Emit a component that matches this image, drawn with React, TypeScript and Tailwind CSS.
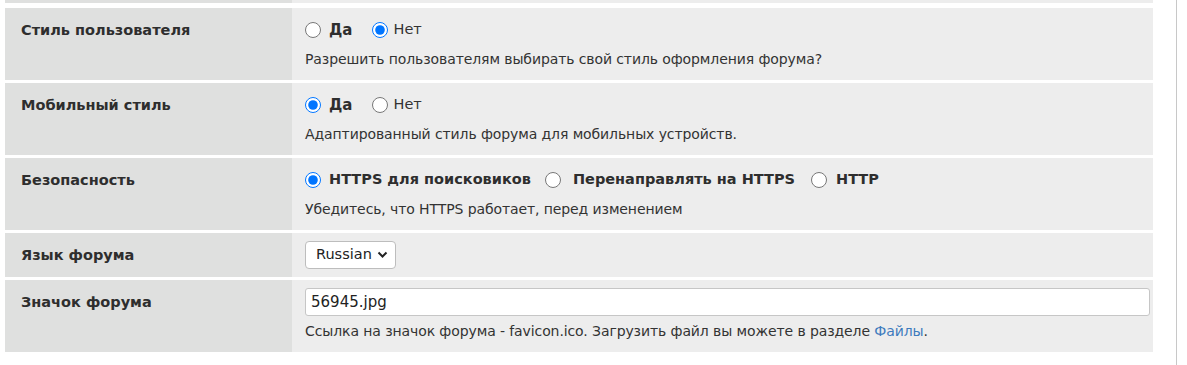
import { useState } from 'react';

// forum settings block
const font = { fontFamily: '"DejaVu Sans", Verdana, sans-serif' };

function Radio({ checked, onChange }: { checked: boolean; onChange: () => void }) {
  return <input type="radio" checked={checked} onChange={onChange} className="m-0 h-4 w-4 shrink-0" />;
}

function Row({ label, children, desc }: { label: string; children: React.ReactNode; desc?: React.ReactNode }) {
  return (
    <div className="flex">
      <div className="w-[287px] shrink-0 bg-[#dfe0df] pl-4 pt-3 text-[14.5px] leading-5 font-bold text-[#2e2e2e]">{label}</div>
      <div className={`flex-1 bg-[#ededed] pl-[13px] pr-[3px] pt-2 ${desc ? 'pb-[11px]' : 'pb-2'}`}>
        <div className="flex h-7 items-center">{children}</div>
        {desc && <div className="mt-[5px] text-[14px] leading-5 tracking-[-0.1px] text-[#333]">{desc}</div>}
      </div>
    </div>
  );
}

export default function App() {
  const [userStyle, setUserStyle] = useState('no');
  const [mobile, setMobile] = useState('yes');
  const [sec, setSec] = useState('search');

  return (
    <div className="h-[365px] w-[1177px] border-r border-[#c8c8c8] bg-white" style={font}>
      <div className="ml-[5px] flex w-[1148px] flex-col gap-[3px]">
        <div className="mb-[2px] flex h-[3px]">
          <div className="w-[287px] bg-[#dfe0df]" />
          <div className="flex-1 bg-[#ededed]" />
        </div>

        <Row label="Стиль пользователя" desc="Разрешить пользователям выбирать свой стиль оформления форума?">
          <Radio checked={userStyle === 'yes'} onChange={() => setUserStyle('yes')} />
          <b className="ml-2 text-[15px] text-[#2e2e2e]">Да</b>
          <span className="ml-5" />
          <Radio checked={userStyle === 'no'} onChange={() => setUserStyle('no')} />
          <span className="ml-[5px] text-[14.5px] text-[#333]">Нет</span>
        </Row>

        <Row label="Мобильный стиль" desc="Адаптированный стиль форума для мобильных устройств.">
          <Radio checked={mobile === 'yes'} onChange={() => setMobile('yes')} />
          <b className="ml-2 text-[15px] text-[#2e2e2e]">Да</b>
          <span className="ml-5" />
          <Radio checked={mobile === 'no'} onChange={() => setMobile('no')} />
          <span className="ml-[5px] text-[14.5px] text-[#333]">Нет</span>
        </Row>

        <Row label="Безопасность" desc="Убедитесь, что HTTPS работает, перед изменением">
          <Radio checked={sec === 'search'} onChange={() => setSec('search')} />
          <b className="ml-2 mr-[14px] text-[14.5px] text-[#2e2e2e]">HTTPS для поисковиков</b>
          <Radio checked={sec === 'redirect'} onChange={() => setSec('redirect')} />
          <b className="ml-3 mr-4 text-[14.5px] text-[#2e2e2e]">Перенаправлять на HTTPS</b>
          <Radio checked={sec === 'http'} onChange={() => setSec('http')} />
          <b className="ml-[9px] text-[14.5px] text-[#2e2e2e]">HTTP</b>
        </Row>

        <Row label="Язык форума">
          <div className="relative">
            <select className="h-7 w-[91px] appearance-none rounded-[4px] border border-[#bdbdbd] bg-white pl-[10px] text-[14.5px] text-[#222]">
              <option>Russian</option>
              <option>English</option>
            </select>
            <svg className="pointer-events-none absolute right-[8px] top-[10px]" width="11" height="8" viewBox="0 0 11 8" fill="none">
              <path d="M1.5 1.5 5.5 5.5 9.5 1.5" stroke="#222" strokeWidth="2" />
            </svg>
          </div>
        </Row>

        <Row
          label="Значок форума"
          desc={
            <>
              Ссылка на значок форума - favicon.ico. Загрузить файл вы можете в разделе{' '}
              <a href="#" className="text-[#3d7bbd]">Файлы</a>.
            </>
          }
        >
          <input
            defaultValue="56945.jpg"
            className="h-7 w-full rounded-[3px] border border-[#c6c6c6] bg-white pl-[5px] text-[15px] text-[#222] outline-none"
          />
        </Row>
      </div>
    </div>
  );
}
